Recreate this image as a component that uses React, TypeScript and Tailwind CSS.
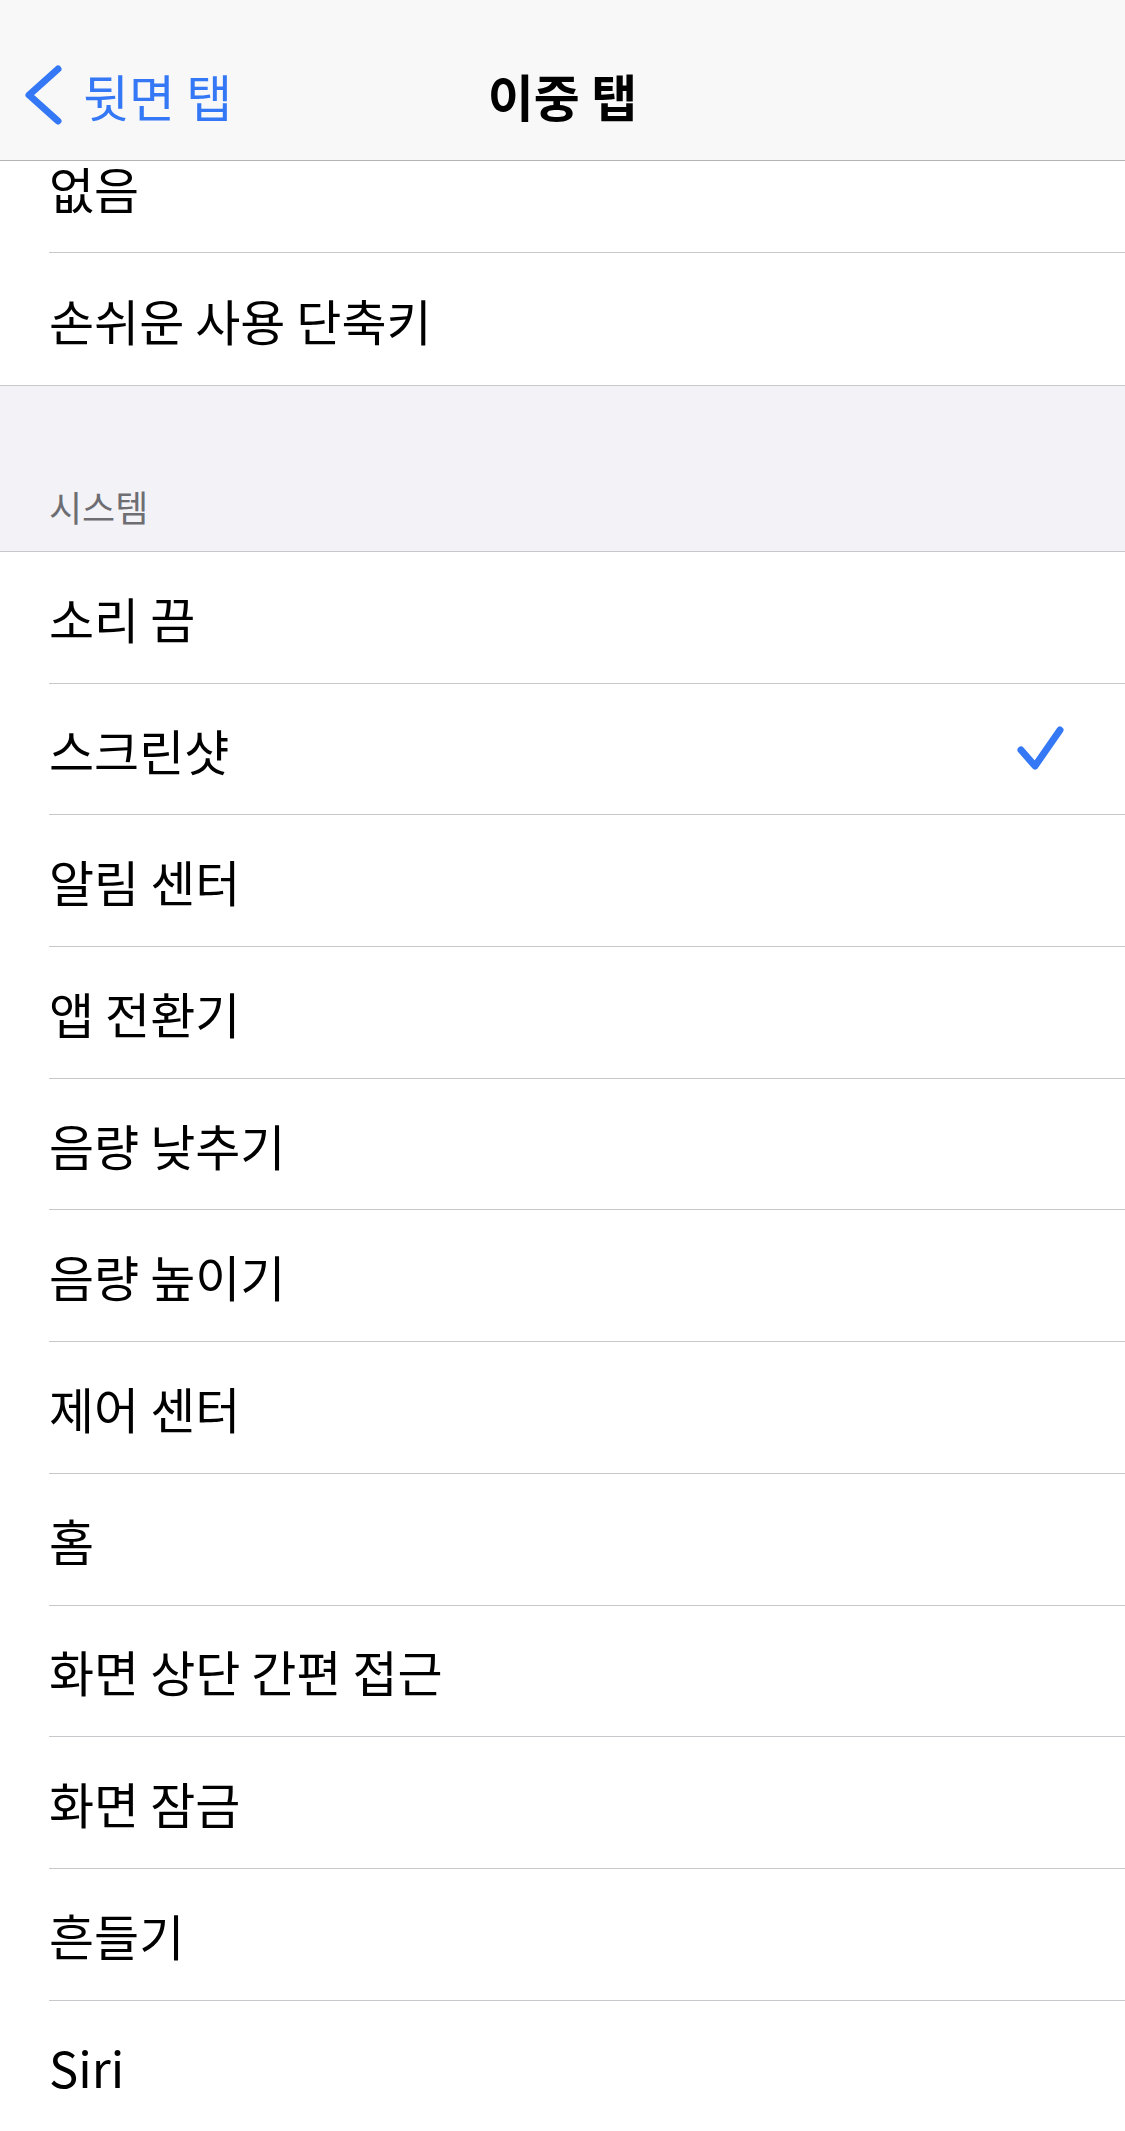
import React from "react";

const FONT = { fontFamily: '"Noto Sans CJK KR", "Noto Sans", sans-serif' };

const systemItems = [
  "소리 끔",
  "스크린샷",
  "알림 센터",
  "앱 전환기",
  "음량 낮추기",
  "음량 높이기",
  "제어 센터",
  "홈",
  "화면 상단 간편 접근",
  "화면 잠금",
  "흔들기",
  "Siri",
];

function Check() {
  return (
    <svg width="48" height="48" viewBox="0 0 48 48" fill="none">
      <path
        d="M5 25 L19 41 L44 5"
        stroke="#3478f6"
        strokeWidth="7"
        strokeLinecap="round"
        strokeLinejoin="round"
      />
    </svg>
  );
}

function Row({
  label,
  checked,
  last,
}: {
  label: string;
  checked?: boolean;
  last?: boolean;
}) {
  return (
    <div className="h-[131.7px] bg-white pl-[49px]">
      <div
        className={`flex h-full items-center justify-between pr-[63px] ${
          last ? "" : "border-b border-[#c8c7cc]"
        }`}
      >
        <span className="text-[49px] leading-none text-black">{label}</span>
        {checked && (
          <div className="-mr-[2px] flex items-center">
            <Check />
          </div>
        )}
      </div>
    </div>
  );
}

export default function App() {
  return (
    <div className="min-h-[2131px] w-[1125px] overflow-hidden bg-white" style={FONT}>
      {/* Navigation bar */}
      <div className="h-[161px] border-b border-[#b4b4b7] bg-[#f8f8f9] pt-[29px]">
        <div className="grid h-[131px] grid-cols-[1fr_auto_1fr] items-center">
          <div className="flex items-center pl-[24px]">
            <svg width="40" height="64" viewBox="0 0 40 64" fill="none">
              <path
                d="M34 6 L5 32 L34 58"
                stroke="#3478f6"
                strokeWidth="7"
                strokeLinecap="round"
                strokeLinejoin="round"
              />
            </svg>
            <span className="ml-[19px] text-[50px] leading-none text-[#3478f6]">뒷면 탭</span>
          </div>
          <div className="text-[50px] font-semibold leading-none text-black">이중 탭</div>
          <div />
        </div>
      </div>

      {/* Partially scrolled row */}
      <div className="h-[92px] bg-white pl-[49px]">
        <div className="flex h-full items-start border-b border-[#c8c7cc] pt-[2px]">
          <span className="text-[49px] leading-none text-black">없음</span>
        </div>
      </div>
      <div className="flex h-[132px] items-center bg-white pl-[49px]">
        <span className="text-[49px] leading-none text-black">손쉬운 사용 단축키</span>
      </div>

      {/* Section header */}
      <div className="flex h-[167px] items-end border-y border-[#c8c7cc] bg-[#f2f2f7] pb-[27px] pl-[49px]">
        <span className="text-[36px] leading-none text-[#6d6d72]">시스템</span>
      </div>

      {systemItems.map((item, i) => (
        <Row
          key={item}
          label={item}
          checked={item === "스크린샷"}
          last={i === systemItems.length - 1}
        />
      ))}
    </div>
  );
}
